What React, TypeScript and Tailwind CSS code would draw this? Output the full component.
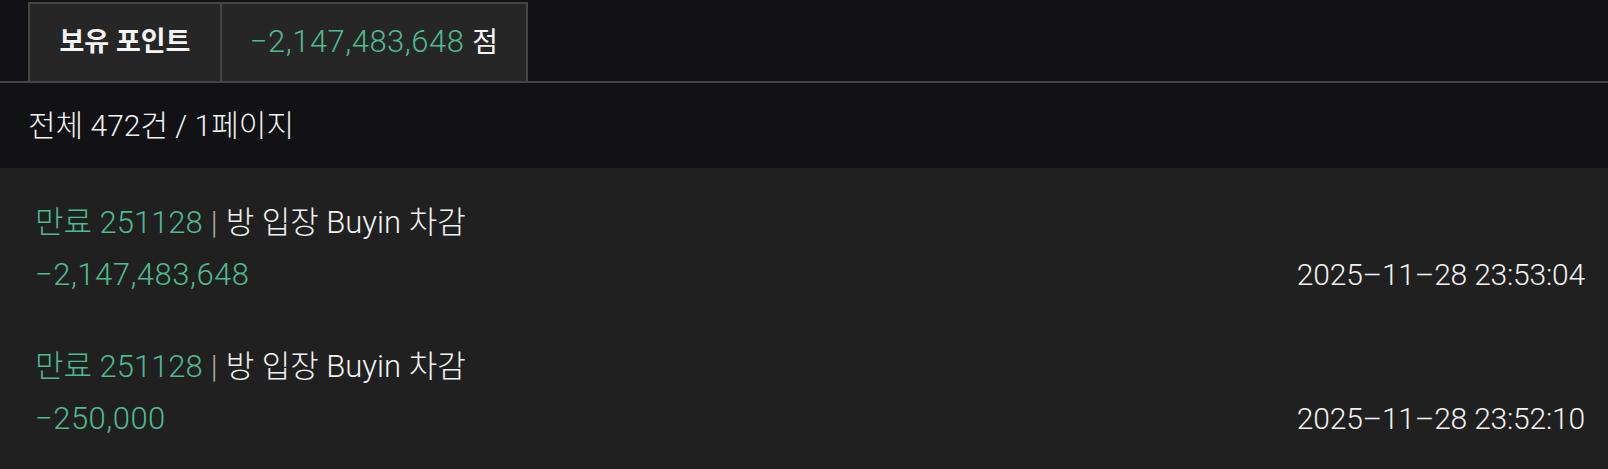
import React from "react";

const font = { fontFamily: "Roboto, 'Noto Sans CJK KR', sans-serif" };

function Row({ amount, time }: { amount: string; time: string }) {
  return (
    <div className="px-[35px] py-[20px]">
      <div className="h-[52px] flex items-center text-[31px] leading-[52px] font-light">
        <span className="text-[#4fb990]">만료 251128</span>
        <span className="text-[#aaaaaa] mx-[8px]">|</span>
        <span className="text-[#f2f2f2]">방 입장 Buyin 차감</span>
      </div>
      <div className="h-[52px] flex items-center justify-between leading-[52px] -mr-[12px]">
        <span className="text-[#4fb990] text-[31px] font-light tracking-[0.5px]">{amount}</span>
        <span className="text-[#f2f2f2] text-[30px] font-light tracking-[-0.2px]">{time}</span>
      </div>
    </div>
  );
}

export default function App() {
  return (
    <div style={font} className="w-[1608px] h-[469px] bg-[#111116] overflow-hidden">
      <div className="pt-[2px] pl-[28px] border-b-2 border-[#454545]">
        <div className="flex h-[79px] w-[500px] border-t-2 border-l-2 border-r-2 border-[#454545] bg-[#262626]">
          <div className="w-[192px] border-r-2 border-[#454545] flex items-center justify-center text-[27px] font-bold text-[#f5f5f5]">
            보유 포인트
          </div>
          <div className="flex-1 flex items-center justify-center text-[31px]">
            <span className="text-[#4fb990] font-light tracking-[0.5px]">−2,147,483,648</span>
            <span className="text-[#f5f5f5] ml-[8px] text-[28px]">점</span>
          </div>
        </div>
      </div>
      <div className="h-[85px] flex items-center pl-[28px] text-[30px] font-light text-[#f2f2f2]">
        전체 472건 / 1페이지
      </div>
      <div className="bg-[#202020] h-full pt-[9px]">
        <Row amount="−2,147,483,648" time="2025–11–28 23:53:04" />
        <Row amount="−250,000" time="2025–11–28 23:52:10" />
      </div>
    </div>
  );
}
